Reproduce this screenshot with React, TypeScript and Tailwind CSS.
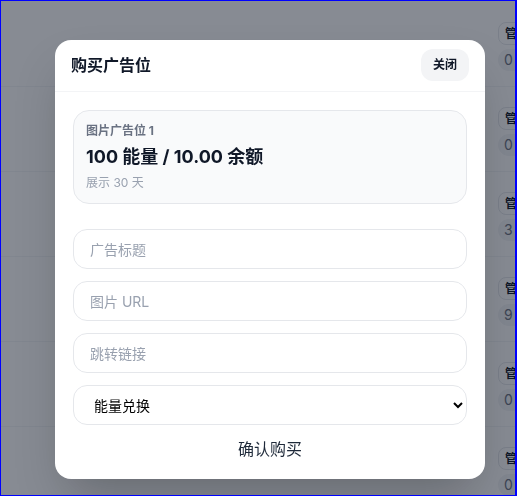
import { useState } from "react";

const FONT = { fontFamily: 'Inter, "Noto Sans CJK SC", sans-serif' };

const rows = [
  { count: "0" },
  { count: "0" },
  { count: "3" },
  { count: "9" },
  { count: "0" },
  { count: "0" },
];

function BackgroundPage() {
  return (
    <div className="h-[496px] overflow-hidden bg-white">
      <div className="pt-[2px]">
        {rows.map((r, i) => (
          <div key={i} className="h-[85px] border-b border-gray-100 pl-[498px] pt-5">
            <div className="flex flex-col items-start gap-1">
              <span className="h-[23px] w-[40px] rounded-lg border border-gray-200 px-1.5 text-xs font-bold leading-[21px] text-gray-900">
                管理
              </span>
              <span className="h-[22px] w-[40px] rounded-full bg-gray-100 px-1.5 text-sm leading-[22px] text-gray-500">
                {r.count}
              </span>
            </div>
          </div>
        ))}
      </div>
    </div>
  );
}

export default function App() {
  const [pay, setPay] = useState("energy");

  return (
    <div className="relative h-[496px] w-full overflow-hidden" style={FONT}>
      <BackgroundPage />

      <div className="fixed inset-0 flex items-start justify-start bg-gray-900/50 pl-[55px] pt-10">
        <div className="w-[430px] overflow-hidden rounded-2xl bg-white shadow-2xl">
          <div className="flex items-center justify-between border-b border-gray-100 px-4 pb-2.5 pt-[9px]">
            <h2 className="text-base font-semibold text-gray-900">购买广告位</h2>
            <button
              type="button"
              className="h-8 w-12 rounded-xl bg-gray-100 text-xs font-bold text-gray-900"
            >
              关闭
            </button>
          </div>

          <div className="p-[18px]">
            <div className="mb-[25px] rounded-2xl border border-gray-200 bg-gray-50 p-3">
              <p className="text-xs font-bold leading-4 text-gray-500">图片广告位 1</p>
              <p className="mt-1 text-lg font-bold leading-7 text-gray-900">100 能量 / 10.00 余额</p>
              <p className="mt-1 text-xs leading-4 text-gray-400">展示 30 天</p>
            </div>

            <div className="flex flex-col gap-3">
              <input
                placeholder="广告标题"
                className="h-10 w-full rounded-[14px] border border-gray-200 px-4 text-sm text-gray-900 placeholder:text-gray-400 outline-none"
              />
              <input
                placeholder="图片 URL"
                className="h-10 w-full rounded-[14px] border border-gray-200 px-4 text-sm text-gray-900 placeholder:text-gray-400 outline-none"
              />
              <input
                placeholder="跳转链接"
                className="h-10 w-full rounded-[14px] border border-gray-200 px-4 text-sm text-gray-900 placeholder:text-gray-400 outline-none"
              />
              <select
                value={pay}
                onChange={(e) => setPay(e.target.value)}
                className="h-10 w-full rounded-[14px] border border-gray-200 bg-white px-4 text-sm text-black outline-none"
              >
                <option value="energy">能量兑换</option>
                <option value="balance">余额支付</option>
              </select>
              <button type="button" className="w-full text-base leading-6 text-gray-800">
                确认购买
              </button>
            </div>
          </div>
        </div>
      </div>

      <div className="pointer-events-none fixed inset-0 border border-r-2 border-[#0000ff]" />
    </div>
  );
}
